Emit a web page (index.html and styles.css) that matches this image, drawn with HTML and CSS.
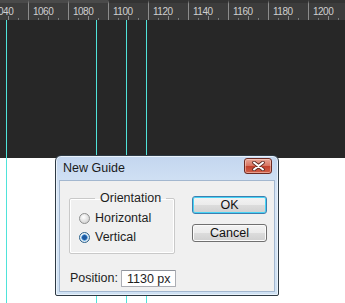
FILE: index.html
```html
<!DOCTYPE html>
<html lang="en">
  <head>
    <meta charset="utf-8" />
    <title>New Guide</title>
    <link rel="stylesheet" href="styles.css">
  </head>
  <body>
    <div class="stage">
      <div class="ruler">
        <div class="ruler-track">
          <div class="seg">1040</div>
          <div class="seg">1060</div>
          <div class="seg">1080</div>
          <div class="seg">1100</div>
          <div class="seg">1120</div>
          <div class="seg">1140</div>
          <div class="seg">1160</div>
          <div class="seg">1180</div>
          <div class="seg">1200</div>
        </div>
      </div>
      <div class="canvas"></div>
      <div class="below"></div>

      <!-- guides sit over the document -->
      <div class="guide" style="left:6px"></div>
      <div class="guide" style="left:96px"></div>
      <div class="guide" style="left:126px"></div>
      <div class="guide" style="left:146px"></div>

      <div class="dialog">
        <div class="titlebar">
          <span class="title">New Guide</span>
          <button class="close" aria-label="Close">
            <svg width="13" height="10" viewBox="0 0 13 10">
              <path d="M2 1.5 L11 8.5 M11 1.5 L2 8.5" stroke="#5a2a24" stroke-width="3.6" stroke-linecap="round"/>
              <path d="M2 1.5 L11 8.5 M11 1.5 L2 8.5" stroke="#fff" stroke-width="2" stroke-linecap="round"/>
            </svg>
          </button>
        </div>
        <div class="client">
          <div class="top-row">
            <fieldset class="group">
              <legend>Orientation</legend>
              <label class="radio"><span class="dot"></span>Horizontal</label>
              <label class="radio checked"><span class="dot"></span>Vertical</label>
            </fieldset>
            <div class="buttons">
              <button class="btn default">OK</button>
              <button class="btn">Cancel</button>
            </div>
          </div>
          <div class="position">
            <span>Position:</span>
            <span class="field">1130 px</span>
          </div>
        </div>
      </div>
    </div>
  </body>
</html>
```

FILE: styles.css
```css
body{
  margin:0;
  background:#fff;
  font:12px/1.2 'Liberation Sans',Arial,sans-serif;
  color:#000;
}
*,:after,:before{box-sizing:border-box}

.stage{
  width:345px;
  height:303px;
  position:relative;
  overflow:hidden;
  display:flex;
  flex-direction:column;
}

/* ruler */
.ruler{
  height:20px;
  flex:none;
  overflow:hidden;
  background:
    linear-gradient(to right,#4a4a4a 0 108px,#333 108px) top/100% 3px no-repeat,
    #3c3c3c;
}
.ruler-track{
  display:flex;
  margin-left:-12px;
}
.ruler .seg{
  flex:none;
  width:40px;
  height:20px;
  padding:3px 0 0 4px;
  border-left:1px solid #8c8c8c;
  border-top:4px solid transparent;
  color:#cfcfcf;
  font-size:10px;
  letter-spacing:-.5px;
  line-height:10px;
  background:
    linear-gradient(#8c8c8c,#8c8c8c) 19px 100%/1px 4px no-repeat,
    repeating-linear-gradient(to right,transparent 0 9px,#7a7a7a 9px 10px) 0 100%/40px 2px no-repeat;
}

.canvas{
  height:138px;
  flex:none;
  background:#272727;
}
.below{
  flex:1;
  background:#fff;
}

.guide{
  position:absolute;
  top:20px;
  bottom:0;
  width:1px;
  background:#4fe3da;
}

/* dialog window */
.dialog{
  position:absolute;
  left:55px;
  top:155px;
  width:224px;
  height:141px;
  border:1px solid #2e3a44;
  border-radius:6px 6px 2px 2px;
  padding:0 3px 3px;
  background:linear-gradient(#c3d6ef,#d8e6f6 40px,#cfe1f3);
  box-shadow:inset 0 0 0 1px #e9f2fb;
  display:flex;
  flex-direction:column;
}
.titlebar{
  height:24px;
  display:flex;
  align-items:center;
  justify-content:space-between;
  padding:0 3px 0 4px;
}
.title{
  font-size:12.5px;
  color:#1a1a1a;
  margin-top:1px;
}
.close{
  width:28px;
  height:16px;
  margin-top:-4px;
  padding:0;
  display:flex;
  align-items:center;
  justify-content:center;
  border:1px solid #6b2a22;
  border-radius:3px;
  background:linear-gradient(#e9a596,#d8735f 50%,#c2402c 51%,#d0614a);
  box-shadow:inset 0 0 0 1px rgba(255,220,210,.5);
}

.client{
  flex:1;
  background:#f0f0f0;
  border:1px solid #a3b7cf;
  padding:10px 0 0 9px;
  display:flex;
  flex-direction:column;
  font-size:12.5px;
}
.top-row{
  display:flex;
  gap:17px;
}

.group{
  width:106px;
  height:63px;
  margin:0;
  padding:5px 0 0 9px;
  border:1px solid #c9c9c9;
  box-shadow:inset 0 0 0 1px #fff;
  border-radius:2px;
  display:flex;
  flex-direction:column;
  gap:5px;
}
.group legend{
  margin-left:16px;
  padding:0 5px;
  color:#1e1e1e;
}
.radio{
  display:flex;
  align-items:center;
  gap:5px;
  color:#1e1e1e;
  height:14px;
}
.radio .dot{
  width:11px;
  height:11px;
  border-radius:50%;
  border:1px solid #8e8f8f;
  background:radial-gradient(circle at 40% 35%,#fff,#d4d4d4 75%);
}
.radio.checked .dot{
  border-color:#2c628b;
  background:
    radial-gradient(circle,#1d5aa1 0 2px,#6fb1e8 3px,transparent 3.5px),
    radial-gradient(circle at 40% 35%,#fff,#d9e4ee 75%);
}

.buttons{
  display:flex;
  flex-direction:column;
  gap:10px;
  padding-top:5px;
}
.btn{
  width:75px;
  height:18px;
  padding:0;
  font:12.5px/1 'Liberation Sans',Arial,sans-serif;
  color:#111;
  border:1px solid #707070;
  border-radius:3px;
  background:linear-gradient(#f3f3f3,#ebebeb 50%,#dcdcdc 51%,#d0d0d0);
  box-shadow:inset 0 0 0 1px #fbfbfb;
}
.btn.default{
  border-color:#3c7fb1;
  box-shadow:inset 0 0 0 1px #48d4f5;
}

.position{
  display:flex;
  align-items:center;
  gap:3px;
  margin-top:16px;
  margin-left:1px;
  color:#1e1e1e;
}
.field{
  width:55px;
  height:17px;
  padding:1px 0 0 5px;
  background:#fff;
  border:1px solid #abadb3;
  border-top-color:#8f939b;
  border-radius:1px;
}
```
